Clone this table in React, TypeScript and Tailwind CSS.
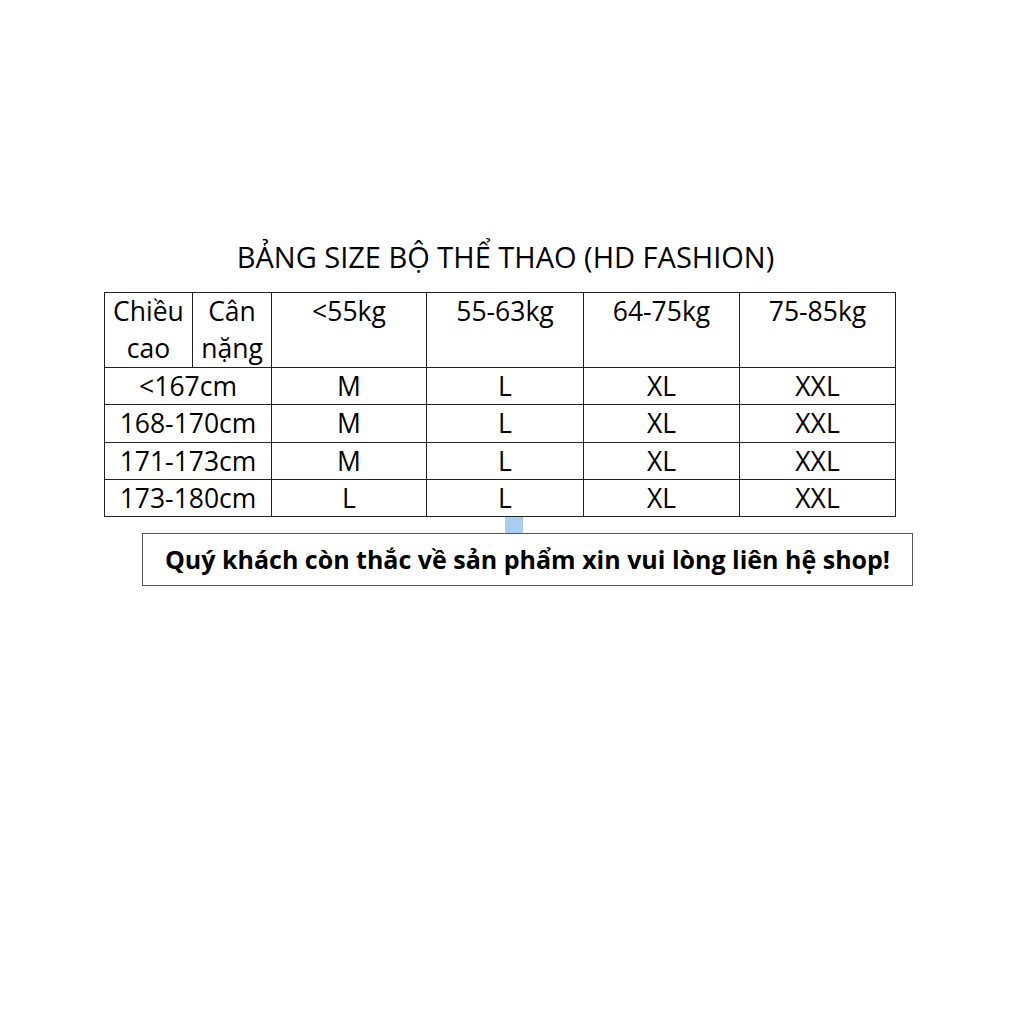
const weights = ["<55kg", "55-63kg", "64-75kg", "75-85kg"];

const rows = [
  { height: "<167cm", sizes: ["M", "L", "XL", "XXL"], h: "h-[37px]" },
  { height: "168-170cm", sizes: ["M", "L", "XL", "XXL"], h: "h-[38px]" },
  { height: "171-173cm", sizes: ["M", "L", "XL", "XXL"], h: "h-[37px]" },
  { height: "173-180cm", sizes: ["L", "L", "XL", "XXL"], h: "h-[37px]" },
];

export default function App() {
  return (
    <div className="w-[1024px] h-[1024px] bg-white text-black font-['Open_Sans',sans-serif]">
      <div className="pt-[238px] pl-[104px]">
        <h1 className="w-[791px] text-center text-[29px] leading-[38px] pl-[12px]">
          BẢNG SIZE BỘ THỂ THAO (HD FASHION)
        </h1>
        <table className="mt-[16px] border-collapse table-fixed text-[26.5px] border border-[#222]">
          <colgroup>
            <col className="w-[88px]" />
            <col className="w-[79px]" />
            <col className="w-[155px]" />
            <col className="w-[157px]" />
            <col className="w-[156px]" />
            <col className="w-[156px]" />
          </colgroup>
          <thead>
            <tr className="h-[75px]">
              <th className="border border-[#222] font-normal align-top leading-[37px]">
                Chiều cao
              </th>
              <th className="border border-[#222] font-normal align-top leading-[37px]">
                Cân nặng
              </th>
              {weights.map((w) => (
                <th key={w} className="border border-[#222] font-normal align-top leading-[37px]">
                  {w}
                </th>
              ))}
            </tr>
          </thead>
          <tbody>
            {rows.map((row, i) => (
              <tr key={i} className={row.h}>
                <td colSpan={2} className="border border-[#222] text-center leading-[35px]">
                  {row.height}
                </td>
                {row.sizes.map((s, j) => (
                  <td key={j} className="border border-[#222] text-center leading-[35px]">
                    {s}
                  </td>
                ))}
              </tr>
            ))}
          </tbody>
        </table>
        <div className="pl-[401px]">
          <div className="w-[18px] h-[16px] bg-[#a9cdf0]" />
        </div>
        <div className="ml-[38px] w-[771px] h-[53px] border border-[#555] flex items-center justify-center font-bold text-[25px]">
          Quý khách còn thắc về sản phẩm xin vui lòng liên hệ shop!
        </div>
      </div>
    </div>
  );
}
